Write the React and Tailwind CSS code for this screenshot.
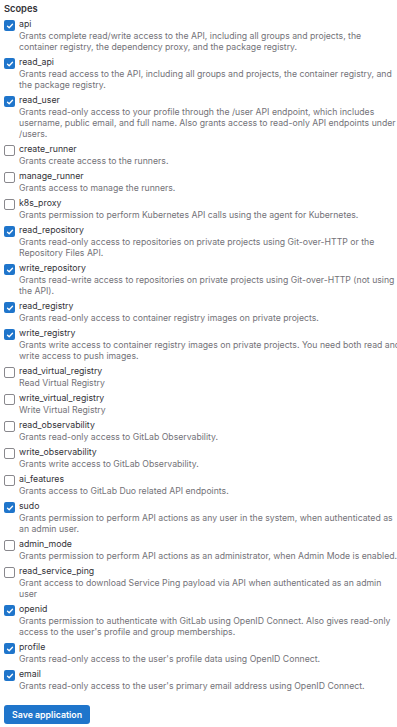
import React from "react";

const scopes = [
  ["api", true, "Grants complete read/write access to the API, including all groups and projects, the container registry, the dependency proxy, and the package registry."],
  ["read_api", true, "Grants read access to the API, including all groups and projects, the container registry, and the package registry."],
  ["read_user", true, "Grants read-only access to your profile through the /user API endpoint, which includes username, public email, and full name. Also grants access to read-only API endpoints under /users."],
  ["create_runner", false, "Grants create access to the runners."],
  ["manage_runner", false, "Grants access to manage the runners."],
  ["k8s_proxy", false, "Grants permission to perform Kubernetes API calls using the agent for Kubernetes."],
  ["read_repository", true, "Grants read-only access to repositories on private projects using Git-over-HTTP or the Repository Files API."],
  ["write_repository", true, "Grants read-write access to repositories on private projects using Git-over-HTTP (not using the API)."],
  ["read_registry", true, "Grants read-only access to container registry images on private projects."],
  ["write_registry", true, "Grants write access to container registry images on private projects. You need both read and write access to push images."],
  ["read_virtual_registry", false, "Read Virtual Registry"],
  ["write_virtual_registry", false, "Write Virtual Registry"],
  ["read_observability", false, "Grants read-only access to GitLab Observability."],
  ["write_observability", false, "Grants write access to GitLab Observability."],
  ["ai_features", false, "Grants access to GitLab Duo related API endpoints."],
  ["sudo", true, "Grants permission to perform API actions as any user in the system, when authenticated as an admin user."],
  ["admin_mode", false, "Grants permission to perform API actions as an administrator, when Admin Mode is enabled."],
  ["read_service_ping", false, "Grant access to download Service Ping payload via API when authenticated as an admin user"],
  ["openid", true, "Grants permission to authenticate with GitLab using OpenID Connect. Also gives read-only access to the user's profile and group memberships."],
  ["profile", true, "Grants read-only access to the user's profile data using OpenID Connect."],
  ["email", true, "Grants read-only access to the user's primary email address using OpenID Connect."],
];

function Box({ checked }) {
  if (checked) {
    return (
      <span className="mt-[2px] flex h-[11px] w-[11px] shrink-0 items-center justify-center rounded-[2px] bg-[#1f75cb]">
        <svg width="8" height="8" viewBox="0 0 8 8" fill="none">
          <path d="M1.5 4.2 L3.2 5.8 L6.5 2.2" stroke="white" strokeWidth="1.3" strokeLinecap="round" strokeLinejoin="round" />
        </svg>
      </span>
    );
  }
  return <span className="mt-[2px] h-[11px] w-[11px] shrink-0 rounded-[2px] border border-[#89888d] bg-white" />;
}

export default function App() {
  return (
    <div className="w-[397px] overflow-hidden bg-white" style={{ fontFamily: "Inter, 'Noto Sans', sans-serif" }}>
      <div className="w-[405.5px] px-[4px] pt-[2px] pb-[2px]">
        <div className="text-[9.3px] font-semibold leading-[13px] text-[#333238]">Scopes</div>
        <div className="mt-[3px] flex flex-col gap-[3px]">
          {scopes.map(([name, checked, desc]) => (
            <div key={name} className="flex gap-[4px]">
              <Box checked={checked} />
              <div className="flex min-w-0 flex-1 flex-col">
                <div className="text-[8.75px] leading-[13px] text-[#333238]">{name}</div>
                <div className="text-[8.7px] leading-[11px] text-[#737278]">{desc}</div>
              </div>
            </div>
          ))}
        </div>
        <button className="mt-[13px] rounded-[3px] bg-[#1f75cb] px-[8px] py-[3px] text-[8.8px] font-semibold leading-[13px] text-white">
          Save application
        </button>
      </div>
    </div>
  );
}
